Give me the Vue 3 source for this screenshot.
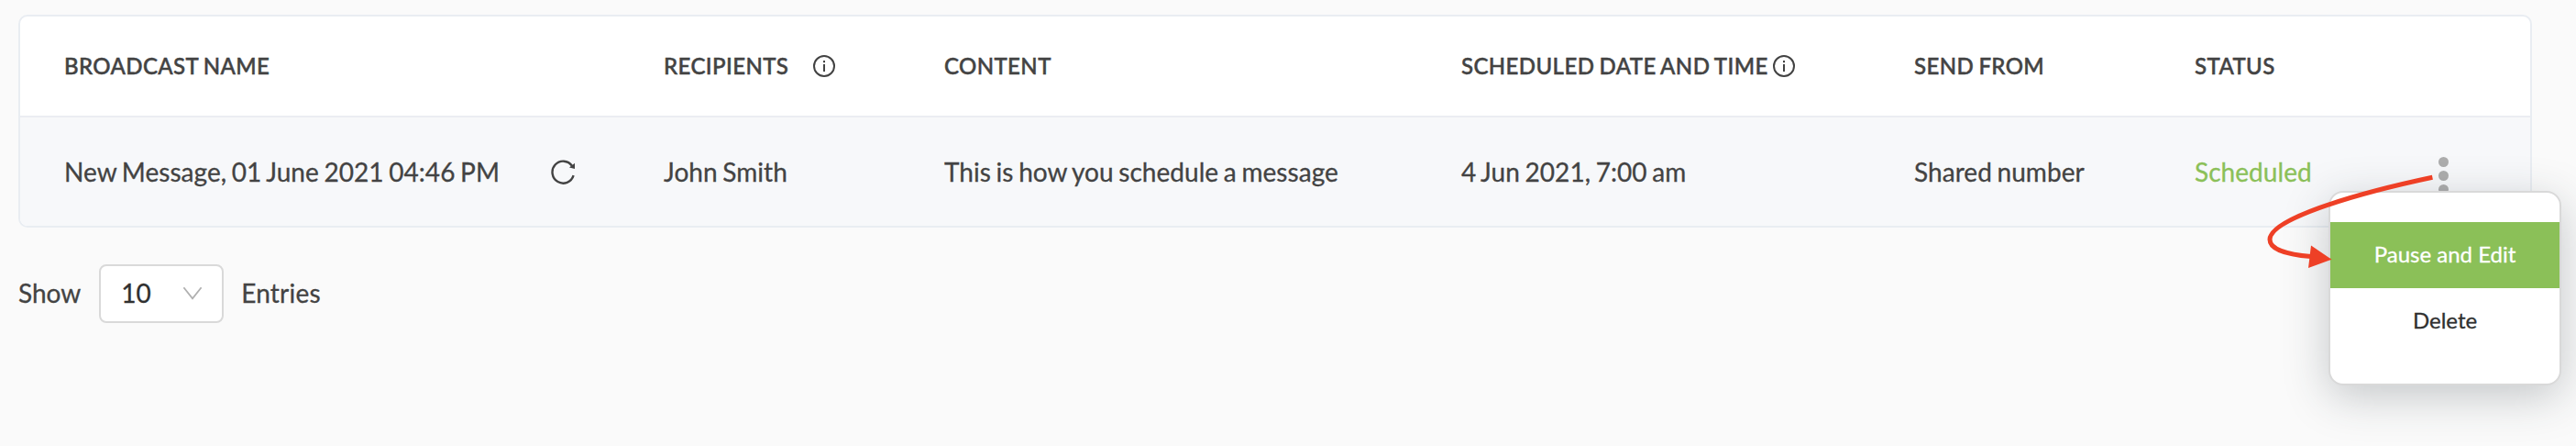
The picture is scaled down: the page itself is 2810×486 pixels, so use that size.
<template>
  <div class="broadcast-page">
    <div class="table-card">
      <div class="table-row table-head">
        <div v-for="col in columns" :key="col.key" class="cell" :class="{ spaced: col.spaced }">
          <span>{{ col.title }}</span>
          <svg v-if="col.info" class="info-icon" viewBox="0 0 24 24">
            <circle cx="12" cy="12" r="11" fill="none" stroke="#434343" stroke-width="2" />
            <rect x="11" y="6" width="2" height="2.2" fill="#434343" />
            <rect x="11" y="10" width="2" height="8" fill="#434343" />
          </svg>
        </div>
      </div>

      <div v-for="(item, index) in broadcasts" :key="index" class="table-row table-body">
        <div class="cell name">
          <span>{{ item.name }}</span>
          <svg class="refresh-icon" viewBox="0 0 28 28">
            <path d="M25.6 18.2 A11.8 12 0 1 1 24 7.8" fill="none" stroke="#434343" stroke-width="2.4" />
            <path d="M27 4.8 V11 L21 9.6 Z" fill="#434343" />
          </svg>
        </div>
        <div class="cell">{{ item.recipients }}</div>
        <div class="cell">{{ item.content }}</div>
        <div class="cell">{{ item.date }}</div>
        <div class="cell">{{ item.from }}</div>
        <div class="cell status">{{ item.status }}</div>
        <div class="cell more">
          <span class="dot"></span>
          <span class="dot"></span>
          <span class="dot"></span>
        </div>
      </div>
    </div>

    <div class="pagination">
      <span class="label">Show</span>
      <div class="page-select">
        <span class="label">{{ pageSize }}</span>
        <svg class="chevron" viewBox="0 0 22 16">
          <path d="M1.4 1.2 L11 13.4 L20.6 1.2" fill="none" stroke="#b0b0b0" stroke-width="1.8" />
        </svg>
      </div>
      <span class="label entries">Entries</span>
    </div>

    <!-- 操作菜单 -->
    <div class="action-menu">
      <div
        v-for="action in actions"
        :key="action"
        class="menu-item"
        :class="{ active: action === activeAction }"
        @click="activeAction = action"
      >
        {{ action }}
      </div>
    </div>

    <svg class="pointer-arrow" viewBox="0 0 200 120">
      <path
        d="M193.4 13.2 C100 33 16 60 16 81 C16 91.5 34 97.5 61 99.5"
        fill="none"
        stroke="#ee4026"
        stroke-width="5"
      />
      <path d="M61 87.6 L83.6 102.7 L58 112 Z" fill="#ee4026" />
    </svg>
  </div>
</template>

<script setup>
import { ref } from 'vue'

const columns = [
  { key: 'name', title: 'BROADCAST NAME' },
  { key: 'recipients', title: 'RECIPIENTS', info: true, spaced: true },
  { key: 'content', title: 'CONTENT' },
  { key: 'date', title: 'SCHEDULED DATE AND TIME', info: true },
  { key: 'from', title: 'SEND FROM' },
  { key: 'status', title: 'STATUS' }
]

const broadcasts = ref([
  {
    name: 'New Message, 01 June 2021 04:46 PM',
    recipients: 'John Smith',
    content: 'This is how you schedule a message',
    date: '4 Jun 2021, 7:00 am',
    from: 'Shared number',
    status: 'Scheduled'
  }
])

const pageSize = ref(10)
const actions = ['Pause and Edit', 'Delete']
const activeAction = ref('Pause and Edit')
</script>

<style>
body {
  background: #fafafa;
}
</style>

<style scoped>
.broadcast-page {
  position: relative;
  box-sizing: border-box;
  width: 2810px;
  height: 486px;
  padding: 16px 48px 0 20px;
  overflow: hidden;
  background: #fafafa;
  color: #434343;
  font-family: Lato, sans-serif;
  font-size: 28px;
  -webkit-text-stroke: 0.3px currentColor;
}

.table-card {
  box-sizing: border-box;
  height: 232px;
  border: 2px solid #e9edf2;
  border-radius: 10px;
  background: #ffffff;
  overflow: hidden;
}

.table-row {
  display: grid;
  grid-template-columns: 654px 306px 564px 494px 306px 264px 1fr;
  padding-left: 48px;
  white-space: nowrap;
}

.table-head {
  height: 108px;
  border-bottom: 2px solid #ebedf2;
  font-size: 24px;
  font-weight: 500;
  letter-spacing: 0.4px;
  word-spacing: -1.2px;
  -webkit-text-stroke: 0.5px currentColor;
}

.table-head .cell span {
  padding-bottom: 2px;
}

.table-body {
  height: 118px;
  background: #f7f8fa;
  letter-spacing: 0.05px;
  word-spacing: -1.6px;
}

.cell {
  display: flex;
  align-items: center;
}

.info-icon {
  width: 24px;
  height: 24px;
  margin-left: 5px;
}

.spaced .info-icon {
  margin-left: 27px;
}

.refresh-icon {
  width: 28px;
  height: 28px;
  margin-left: 55px;
}

.status {
  color: #8bc058;
}

.more {
  flex-direction: column;
  align-items: flex-start;
  justify-content: center;
  gap: 4px;
  padding-top: 9px;
  padding-left: 2px;
}

.dot {
  width: 11px;
  height: 11px;
  border-radius: 50%;
  background: #adadad;
}

.pagination {
  display: flex;
  align-items: center;
  height: 64px;
  margin-top: 40px;
}

.label {
  padding-bottom: 2px;
}

.entries {
  letter-spacing: 0.2px;
}

.page-select {
  box-sizing: border-box;
  display: flex;
  align-items: center;
  justify-content: space-between;
  width: 136px;
  height: 64px;
  margin: 0 19px 0 20px;
  padding: 0 21px 0 22px;
  border: 2px solid #d9d9d9;
  border-radius: 8px;
  background: #ffffff;
  color: #303030;
}

.chevron {
  width: 22px;
  height: 16px;
}

.action-menu {
  position: absolute;
  top: 208px;
  left: 2540px;
  box-sizing: border-box;
  width: 254px;
  height: 212px;
  padding-top: 32px;
  border: 2px solid #d9d9d9;
  border-radius: 16px;
  background: #ffffff;
  box-shadow: 0 12px 48px rgba(40, 50, 60, 0.25);
  color: #303030;
  font-size: 24px;
}

.menu-item {
  height: 72px;
  line-height: 70px;
  text-align: center;
  cursor: pointer;
}

.menu-item.active {
  background: #8bc058;
  color: #ffffff;
}

.pointer-arrow {
  position: absolute;
  top: 180px;
  left: 2460px;
  width: 200px;
  height: 120px;
  pointer-events: none;
}
</style>
